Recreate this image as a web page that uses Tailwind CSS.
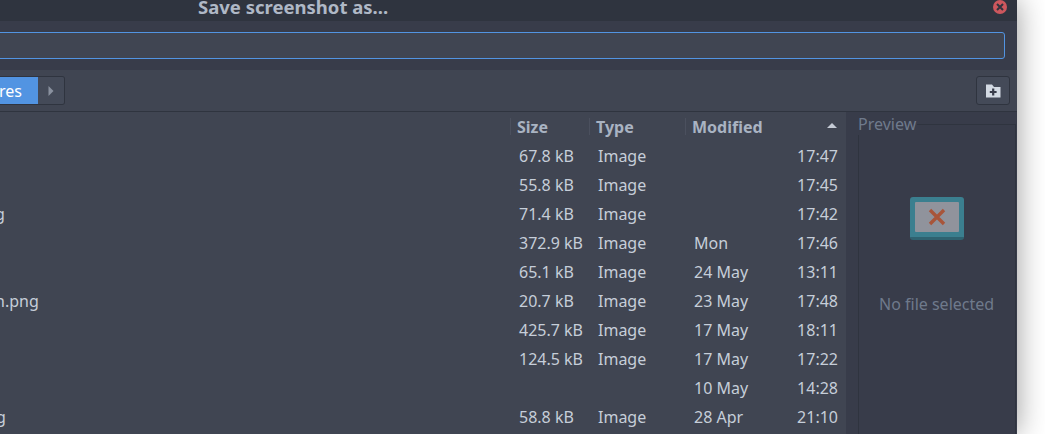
<!DOCTYPE html>
<html><head><meta charset="utf-8"><script src="https://cdn.jsdelivr.net/npm/@tailwindcss/browser@4"></script></head>
<body class="m-0 h-[434px] w-[1045px] overflow-hidden bg-white">
<div class="flex h-[434px] w-[1017px] flex-col overflow-hidden bg-[#383c4a] font-['Noto_Sans',sans-serif] text-[16px] text-[#c6ced9] shadow-[0_0_28px_rgba(0,0,0,0.4)]">
  <header class="relative h-[21px] shrink-0 bg-[#2f343f]">
    <div class="absolute left-[198px] top-[-5px] whitespace-nowrap text-[18.5px] font-bold leading-6 text-[#afb8c6]">Save screenshot as...</div>
    <div class="absolute left-[993px] top-[0px] flex h-[14px] w-[14px] items-center justify-center rounded-full bg-[#cc575d]">
      <svg width="8" height="8" viewBox="0 0 8 8"><path d="M1 1 7 7M7 1 1 7" stroke="#2f343f" stroke-width="2"/></svg>
    </div>
  </header>
  <div class="flex h-[49px] shrink-0 items-start pr-3 pt-[11px]">
    <div class="ml-[-4px] h-[27px] flex-1 rounded-[3px] border border-[#5294e2] bg-[#404552]"></div>
  </div>
  <div class="flex h-[42px] shrink-0 items-start justify-between border-b border-[#2f343f] bg-[#404552] pl-0 pr-[7px] pt-[6px]">
    <div class="flex h-[29px] w-[65px] overflow-hidden rounded-r-[3px] border border-l-0 border-[#2f343f]">
      <div class="flex w-[38px] items-center justify-end bg-[#5294e2] pr-[16px] leading-none text-white"><span>res</span></div>
      <div class="flex flex-1 items-center justify-center bg-[#444a58]">
        <svg width="6" height="10" viewBox="0 0 6 10"><path d="M0.5 0 5.5 5 0.5 10Z" fill="#8a919f"/></svg>
      </div>
    </div>
    <div class="flex h-[29px] w-[34px] items-center justify-center rounded-[3px] border border-[#2f343f] bg-[#444a58]">
      <svg width="15" height="14" viewBox="0 0 15 14"><path d="M0 0.5H6L8 3H14.5V13.5H0Z" fill="#d3dae3"/><path d="M7.2 4.5V11.5M3.8 8H10.6" stroke="#383c4a" stroke-width="2.2"/></svg>
    </div>
  </div>
  <div class="flex min-h-0 flex-1">
    <main class="relative w-[846px] shrink-0 bg-[#404552]">
      <div class="relative h-[30px] font-bold leading-[30px] text-[#a9b3c2]">
        <span class="absolute left-[510px] top-[6px] h-[17px] w-px bg-[#4b505e]"></span><span class="absolute left-[517px]">Size</span>
        <span class="absolute left-[589px] top-[6px] h-[17px] w-px bg-[#4b505e]"></span><span class="absolute left-[596px]">Type</span>
        <span class="absolute left-[685px] top-[6px] h-[17px] w-px bg-[#4b505e]"></span><span class="absolute left-[692px]">Modified</span>
        <svg class="absolute left-[827px] top-[11px]" width="10" height="5" viewBox="0 0 10 5"><path d="M5 0 10 5H0Z" fill="#c5cbd5"/></svg>
      </div>
      <div class="grid grid-cols-[519px_79px_96px_144px] auto-rows-[29px] items-center leading-[29px]">
        <span></span><span>67.8 kB</span><span>Image</span><span class="flex justify-between"><span></span><span>17:47</span></span>
        <span></span><span>55.8 kB</span><span>Image</span><span class="flex justify-between"><span></span><span>17:45</span></span>
        <span class="ml-[-5px]">g</span><span>71.4 kB</span><span>Image</span><span class="flex justify-between"><span></span><span>17:42</span></span>
        <span></span><span>372.9 kB</span><span>Image</span><span class="flex justify-between"><span>Mon</span><span>17:46</span></span>
        <span></span><span>65.1 kB</span><span>Image</span><span class="flex justify-between"><span>24 May</span><span>13:11</span></span>
        <span class="ml-[-5px]">n.png</span><span>20.7 kB</span><span>Image</span><span class="flex justify-between"><span>23 May</span><span>17:48</span></span>
        <span></span><span>425.7 kB</span><span>Image</span><span class="flex justify-between"><span>17 May</span><span>18:11</span></span>
        <span></span><span>124.5 kB</span><span>Image</span><span class="flex justify-between"><span>17 May</span><span>17:22</span></span>
        <span></span><span></span><span></span><span class="flex justify-between"><span>10 May</span><span>14:28</span></span>
        <span class="ml-[-4px]">g</span><span>58.8 kB</span><span>Image</span><span class="flex justify-between"><span>28 Apr</span><span>21:10</span></span>
      </div>
    </main>
    <aside class="relative flex-1 bg-[#383c4a]">
      <div class="absolute left-[12px] top-[12px] h-[400px] w-[158px] border border-[#2f343f]"></div>
      <div class="absolute left-[12px] top-[1px] bg-[#383c4a] pr-[1px] leading-[22px] text-[#6f7a8c]">Preview</div>
      <div class="absolute left-[64px] top-[85px] flex h-[43px] w-[54px] items-center justify-center rounded-[3px] border-b-[3px] border-[#2f6270] bg-[#3b7f8f]">
        <div class="flex h-[30px] w-[44px] items-center justify-center rounded-[1px] bg-[#90939c]">
          <svg width="18" height="18" viewBox="0 0 18 18"><path d="M2 2 16 16M16 2 2 16" stroke="#a8553a" stroke-width="3.4"/></svg>
        </div>
      </div>
      <div class="absolute left-[33px] top-[180px] leading-[24px] text-[#6f7a8c]">No file selected</div>
    </aside>
  </div>
</div>
</body></html>
